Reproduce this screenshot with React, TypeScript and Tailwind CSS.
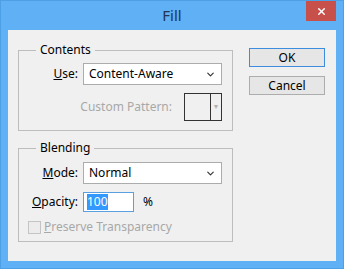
import { X, ChevronDown } from 'lucide-react'

const FONT = { fontFamily: '"Noto Sans", "Open Sans", Arial, sans-serif' }

function Group({ title, children, className }: { title: string; children: React.ReactNode; className?: string }) {
  return (
    <div className={`relative border border-[#bdbdbd] ${className ?? ''}`}>
      <span className="absolute -top-[10px] left-[17px] bg-[#f0f0f0] px-[4px] text-[12px] leading-[18px] text-black">
        {title}
      </span>
      {children}
    </div>
  )
}

function Select({ value }: { value: string }) {
  return (
    <div className="flex h-[22px] w-[139px] items-center justify-between border border-[#acacac] bg-white pl-[5px] pr-[5px]">
      <span className="text-[12px] leading-none text-black">{value}</span>
      <ChevronDown className="h-[11px] w-[11px] text-[#333]" strokeWidth={2.5} />
    </div>
  )
}

export default function App() {
  return (
    <div className="h-[269px] w-[344px] overflow-hidden bg-white" style={FONT}>
      <div className="flex h-full w-full flex-col border border-[#4d9fe6] bg-[#60b0f6]">
        {/* Title bar */}
        <div className="relative flex h-[29px] shrink-0 items-center justify-center">
          <span className="text-[15px] leading-none text-[#22364d]">Fill</span>
          <button className="absolute right-[7px] top-0 flex h-[20px] w-[30px] items-center justify-center bg-[#c8504b]">
            <X className="h-[11px] w-[11px] text-white" strokeWidth={3} />
          </button>
        </div>

        {/* Client area */}
        <div className="mx-[7px] flex h-[231px] bg-[#f0f0f0] pl-[10px] pt-[20px]">
          <div className="flex w-[215px] flex-col">
            <Group title="Contents" className="h-[81px] pt-[12px]">
              <div className="flex items-center">
                <span className="w-[64px] pr-[5px] text-right text-[12px] text-black">
                  <span className="underline">U</span>se:
                </span>
                <Select value="Content-Aware" />
              </div>
              <div className="mt-[8px] flex items-center">
                <span className="w-[165px] pr-[12px] text-right text-[12px] text-[#a8a8a8]">Custom Pattern:</span>
                <div className="flex h-[28px] w-[38px] border border-[#333]">
                  <div className="w-[26px] border-r border-[#333]" />
                  <div className="flex flex-1 items-center justify-center text-[7px] text-[#b0b0b0]">▼</div>
                </div>
              </div>
            </Group>

            <Group title="Blending" className="mt-[17px] h-[94px] pt-[13px]">
              <div className="flex items-center">
                <span className="w-[64px] pr-[5px] text-right text-[12px] text-black">
                  <span className="underline">M</span>ode:
                </span>
                <Select value="Normal" />
              </div>
              <div className="mt-[8px] flex items-center">
                <span className="w-[64px] pr-[5px] text-right text-[12px] text-black">
                  <span className="underline">O</span>pacity:
                </span>
                <div className="flex h-[20px] w-[51px] items-center border border-[#5a9fe0] bg-white pl-[3px]">
                  <span className="bg-[#3399ff] text-[12px] leading-[16px] text-white">100</span>
                </div>
                <span className="ml-[9px] text-[12px] text-black">%</span>
              </div>
              <div className="mt-[6px] flex items-center pl-[9px]">
                <div className="h-[13px] w-[13px] border border-[#c4c4c4] bg-[#ececec]" />
                <span className="ml-[3px] text-[12px] text-[#a8a8a8]">
                  <span className="underline">P</span>reserve Transparency
                </span>
              </div>
            </Group>
          </div>

          <div className="ml-[16px] flex flex-col">
            <button className="-mt-[2px] h-[19px] w-[76px] border border-[#3c8de0] bg-[#e6e6e6] text-[12px] leading-none text-black">
              OK
            </button>
            <button className="mt-[9px] h-[19px] w-[76px] border border-[#adadad] bg-[#e6e6e6] text-[12px] leading-none text-black">
              Cancel
            </button>
          </div>
        </div>
      </div>
    </div>
  )
}
